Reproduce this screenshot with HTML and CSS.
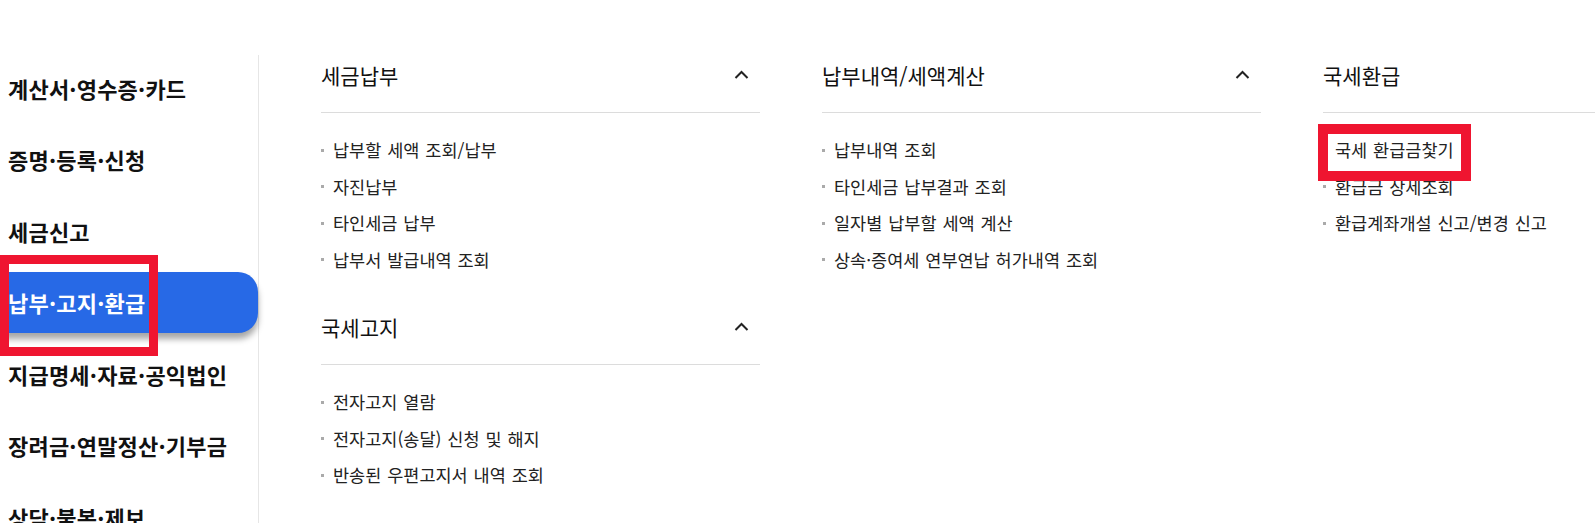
FILE: index.html
```html
<!DOCTYPE html>
<html lang="ko">
<head>
<meta charset="UTF-8" />
<title>납부·고지·환급</title>
<link rel="stylesheet" href="styles.css">
</head>
<body>

<div class="page">
  <nav class="side">
    <ul>
      <li><a href="#">계산서·영수증·카드</a></li>
      <li><a href="#">증명·등록·신청</a></li>
      <li><a href="#">세금신고</a></li>
      <li class="on"><a href="#">납부·고지·환급</a></li>
      <li><a href="#">지급명세·자료·공익법인</a></li>
      <li><a href="#">장려금·연말정산·기부금</a></li>
      <li><a href="#">상담·불복·제보</a></li>
    </ul>
  </nav>

  <div class="menus">
    <div class="col">
      <div class="group">
        <h3>세금납부 <span class="arrow"><svg width="15" height="9" viewBox="0 0 15 9"><polyline points="1.5,8 7.5,2 13.5,8" fill="none" stroke="#222" stroke-width="2"/></svg></span></h3>
        <ul>
          <li>납부할 세액 조회/납부</li>
          <li>자진납부</li>
          <li>타인세금 납부</li>
          <li>납부서 발급내역 조회</li>
        </ul>
      </div>
      <div class="group">
        <h3>국세고지 <span class="arrow"><svg width="15" height="9" viewBox="0 0 15 9"><polyline points="1.5,8 7.5,2 13.5,8" fill="none" stroke="#222" stroke-width="2"/></svg></span></h3>
        <ul>
          <li>전자고지 열람</li>
          <li>전자고지(송달) 신청 및 해지</li>
          <li>반송된 우편고지서 내역 조회</li>
        </ul>
      </div>
    </div>

    <div class="col">
      <div class="group">
        <h3>납부내역/세액계산 <span class="arrow"><svg width="15" height="9" viewBox="0 0 15 9"><polyline points="1.5,8 7.5,2 13.5,8" fill="none" stroke="#222" stroke-width="2"/></svg></span></h3>
        <ul>
          <li>납부내역 조회</li>
          <li>타인세금 납부결과 조회</li>
          <li>일자별 납부할 세액 계산</li>
          <li>상속·증여세 연부연납 허가내역 조회</li>
        </ul>
      </div>
    </div>

    <div class="col">
      <div class="group">
        <h3>국세환급 <span class="arrow"><svg width="15" height="9" viewBox="0 0 15 9"><polyline points="1.5,8 7.5,2 13.5,8" fill="none" stroke="#222" stroke-width="2"/></svg></span></h3>
        <ul>
          <li>국세 환급금찿기</li>
          <li>환급금 상세조회</li>
          <li>환급계좌개설 신고/변경 신고</li>
        </ul>
      </div>
    </div>
  </div>
</div>

<!-- 강조 표시 -->
<div class="mark mark-side"></div>
<div class="mark mark-refund"></div>

</body>
</html>
```

FILE: styles.css
```css
html, body {
  margin: 0;
  padding: 0;
  background: #fff;
  overflow: hidden;
}
body {
  font-family: "Noto Sans CJK KR", "Noto Sans", sans-serif;
  color: #222;
  width: 1595px;
  height: 523px;
}
ul {
  list-style: none;
  margin: 0;
  padding: 0;
}
a {
  color: inherit;
  text-decoration: none;
}
.page {
  display: flex;
  align-items: flex-start;
}
.side {
  flex: 0 0 258px;
  margin-top: 55px;
  height: 468px;
  border-right: 1px solid #e6e6e6;
}
.side ul {
  margin-top: -3px;
}
.side li {
  height: 71.5px;
  display: flex;
  align-items: center;
}
.side li a {
  display: flex;
  align-items: center;
  width: 100%;
  height: 61px;
  padding-left: 8px;
  font-size: 22px;
  font-weight: 700;
  color: #111;
  letter-spacing: 0.2px;
  box-sizing: border-box;
}
.side li.on a {
  background: #2769e6;
  color: #fff;
  border-radius: 0 20px 20px 0;
  box-shadow: 0 6px 6px rgba(0, 0, 0, 0.35);
}
.menus {
  flex: 1;
  display: flex;
  gap: 62px;
  padding-left: 62px;
  margin-top: 55px;
  overflow: hidden;
}
.col {
  flex: 0 0 439px;
}
.group {
  margin-bottom: 29px;
}
.group h3 {
  display: flex;
  justify-content: space-between;
  align-items: center;
  margin: 0;
  height: 40px;
  padding: 0 11px 17px 0;
  border-bottom: 1px solid #dcdcdc;
  font-size: 21px;
  font-weight: 400;
  color: #111;
}
.arrow {
  display: flex;
  margin-top: -2px;
}
.group ul {
  padding-top: 19px;
}
.group li {
  line-height: 36.5px;
  height: 36.5px;
  font-size: 17.5px;
  word-spacing: 1px;
  color: #222;
  white-space: nowrap;
}
.group li::before {
  content: "";
  display: inline-block;
  width: 3px;
  height: 3px;
  background: #aaa;
  margin: 0 9px 0 0;
  vertical-align: middle;
  position: relative;
  top: -2px;
}
.mark {
  position: absolute;
  border: 9px solid #ef1530;
  box-sizing: border-box;
}
.mark-side {
  left: 0;
  top: 255px;
  width: 158px;
  height: 101px;
}
.mark-refund {
  left: 1318px;
  top: 124px;
  width: 153px;
  height: 57px;
  border-width: 10px;
}
```
